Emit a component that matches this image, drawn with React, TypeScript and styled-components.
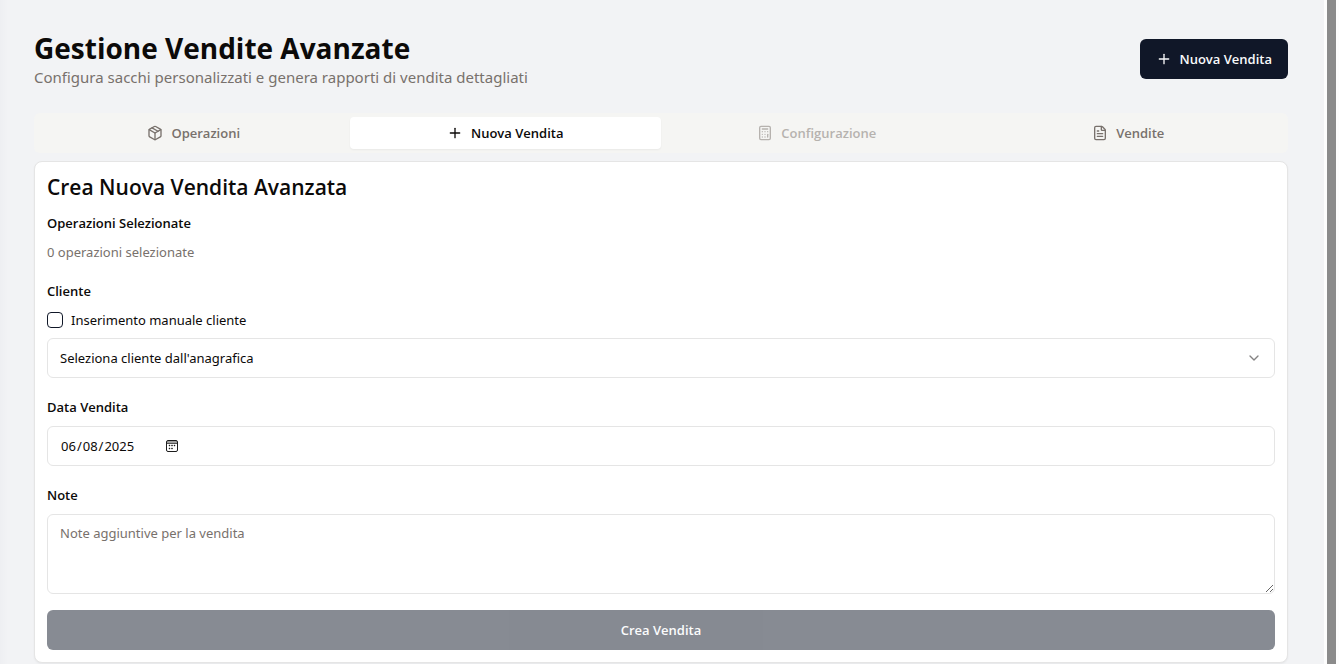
import React, { useState } from "react";
import styled, { createGlobalStyle, css } from "styled-components";
import { Calculator, ChevronDown, FileText, Package, Plus } from "lucide-react";

const GlobalStyle = createGlobalStyle`
  *, *::before, *::after { box-sizing: border-box; }
  body {
    margin: 0;
    background: #fdfdfd;
    color: #0c0a09;
    font-family: "Noto Sans", "Open Sans", sans-serif;
    font-size: 16px;
    line-height: 24px;
  }
  h1, h2, p { margin: 0; }
  button, input, select, textarea { font: inherit; color: inherit; }
`;

const heading = css`
  font-family: "Open Sans", "Noto Sans", sans-serif;
`;

const Shell = styled.div`
  display: flex;
  min-height: 100vh;
`;

const Page = styled.main`
  flex: 1;
  min-width: 0;
  padding: 29px 36px 1px 34px;
  background: linear-gradient(to right, #eeeff2, #f2f3f5 8px);
`;

const ScrollTrack = styled.div`
  flex: none;
  width: 15px;
  padding: 0 3px;
  display: flex;
`;

const ScrollThumb = styled.div`
  flex: 1;
  background: #8b8b8b;
`;

const Header = styled.header`
  display: flex;
  align-items: center;
  justify-content: space-between;
  margin-bottom: 24px;
`;

const Title = styled.h1`
  ${heading}
  padding-top: 2px;
  font-size: 28px;
  line-height: 34px;
  font-weight: 700;
`;

const Subtitle = styled.p`
  font-size: 15px;
  line-height: 24px;
  color: #78716c;
`;

const Button = styled.button<{ $block?: boolean }>`
  ${heading}
  display: inline-flex;
  align-items: center;
  justify-content: center;
  gap: 8px;
  height: 40px;
  padding: 0 16px;
  border: 0;
  border-radius: 6px;
  background: #101728;
  color: #f9fafb;
  font-size: 13px;
  line-height: 20px;
  font-weight: 600;
  ${(p) => p.$block && css`width: 100%;`}
  &:disabled { opacity: 0.5; }
`;

const TabList = styled.div`
  display: grid;
  grid-template-columns: repeat(4, 1fr);
  padding: 4px;
  margin-bottom: 8px;
  border-radius: 6px;
  background: #f5f5f3;
`;

const Tab = styled.button`
  ${heading}
  display: flex;
  align-items: center;
  justify-content: center;
  gap: 8px;
  height: 32px;
  padding: 0 12px;
  border: 0;
  border-radius: 4px;
  background: transparent;
  color: #78716c;
  font-size: 13px;
  line-height: 20px;
  font-weight: 600;
  &[aria-selected="true"] {
    background: #ffffff;
    color: #0c0a09;
    box-shadow: 0 1px 2px rgba(0, 0, 0, 0.05);
  }
  &:disabled { opacity: 0.5; }
`;

const Card = styled.section`
  padding: 12px;
  border: 1px solid #e5e5e5;
  border-radius: 8px;
  background: #ffffff;
  box-shadow: 0 1px 2px rgba(0, 0, 0, 0.05);
`;

const CardTitle = styled.h2`
  ${heading}
  margin-bottom: 10px;
  font-size: 21px;
  line-height: 26px;
  font-weight: 600;
`;

const Form = styled.form`
  display: flex;
  flex-direction: column;
  gap: 16px;
`;

const Field = styled.div`
  display: flex;
  flex-direction: column;
  gap: 8px;
`;

const Label = styled.label`
  ${heading}
  padding-top: 2px;
  font-size: 13px;
  line-height: 22px;
  font-weight: 600;
`;

const Hint = styled.p`
  font-size: 13px;
  line-height: 20px;
  color: #78716c;
`;

const CheckRow = styled.label`
  display: flex;
  align-items: center;
  gap: 8px;
  font-size: 13px;
  line-height: 20px;
`;

const Checkbox = styled.input`
  appearance: none;
  width: 16px;
  height: 16px;
  margin: 0;
  border: 1px solid #101728;
  border-radius: 4px;
  &:checked { background: #101728; }
`;

const control = css`
  width: 100%;
  height: 40px;
  padding: 8px 12px;
  border: 1px solid #e5e5e5;
  border-radius: 6px;
  background: #ffffff;
  font-size: 13px;
  line-height: 20px;
`;

const SelectWrap = styled.div`
  display: grid;
  align-items: center;
  > * { grid-area: 1 / 1; }
  > svg {
    justify-self: end;
    margin-right: 13px;
    opacity: 0.5;
    pointer-events: none;
  }
`;

const Select = styled.select`
  ${control}
  appearance: none;
`;

const calendarIcon = encodeURIComponent(
  `<svg xmlns="http://www.w3.org/2000/svg" width="14" height="14" viewBox="0 0 14 14">
    <path d="M2 2h10v2H2z" fill="#a0a0a0"/>
    <rect x="1.5" y="1.5" width="11" height="11" rx="1.5" fill="none" stroke="#1c1c1c"/>
    <path d="M2 4.500h10" stroke="#555555"/>
    <path d="M4 6h1v1H4zM6.500 6h1v1h-1zM9 6h1v1H9zM4 9h1v1H4zM6.500 9h1v1h-1z" fill="#1c1c1c" stroke="#1c1c1c" stroke-width="0.4"/>
  </svg>`
);

const DateInput = styled.input`
  ${control}
  display: flex;
  &::-webkit-calendar-picker-indicator {
    width: 14px;
    height: 14px;
    padding: 0;
    margin-left: 4px;
    background: url("data:image/svg+xml,${calendarIcon}") center / 14px 14px no-repeat;
  }
`;

const TextArea = styled.textarea`
  ${control}
  display: block;
  height: 80px;
  resize: vertical;
  &::placeholder { color: #78716c; opacity: 1; }
`;

const tabs = [
  { id: "operazioni", label: "Operazioni", Icon: Package },
  { id: "nuova", label: "Nuova Vendita", Icon: Plus },
  { id: "configurazione", label: "Configurazione", Icon: Calculator, disabled: true },
  { id: "vendite", label: "Vendite", Icon: FileText },
];

export default function App() {
  const [active, setActive] = useState("nuova");
  const [manual, setManual] = useState(false);
  const [date, setDate] = useState("2025-06-08");

  return (
    <>
      <GlobalStyle />
      <Shell>
        <Page>
          <Header>
            <div>
              <Title>Gestione Vendite Avanzate</Title>
              <Subtitle>Configura sacchi personalizzati e genera rapporti di vendita dettagliati</Subtitle>
            </div>
            <Button type="button" onClick={() => setActive("nuova")}>
              <Plus size={16} />
              Nuova Vendita
            </Button>
          </Header>
          <TabList role="tablist">
            {tabs.map(({ id, label, Icon, disabled }) => (
              <Tab
                key={id}
                type="button"
                role="tab"
                aria-selected={active === id}
                disabled={disabled}
                onClick={() => setActive(id)}
              >
                <Icon size={16} />
                {label}
              </Tab>
            ))}
          </TabList>
          <Card>
            <CardTitle>Crea Nuova Vendita Avanzata</CardTitle>
            <Form>
              <Field>
                <Label as="div">Operazioni Selezionate</Label>
                <Hint>0 operazioni selezionate</Hint>
              </Field>
              <Field>
                <Label htmlFor="cliente">Cliente</Label>
                <CheckRow>
                  <Checkbox type="checkbox" checked={manual} onChange={(e) => setManual(e.target.checked)} />
                  Inserimento manuale cliente
                </CheckRow>
                <SelectWrap>
                  <Select id="cliente" defaultValue="">
                    <option value="">Seleziona cliente dall'anagrafica</option>
                  </Select>
                  <ChevronDown size={16} />
                </SelectWrap>
              </Field>
              <Field>
                <Label htmlFor="data">Data Vendita</Label>
                <DateInput id="data" type="date" value={date} onChange={(e) => setDate(e.target.value)} />
              </Field>
              <Field>
                <Label htmlFor="note">Note</Label>
                <TextArea id="note" placeholder="Note aggiuntive per la vendita" />
              </Field>
              <Button type="submit" $block disabled>
                Crea Vendita
              </Button>
            </Form>
          </Card>
        </Page>
        <ScrollTrack>
          <ScrollThumb />
        </ScrollTrack>
      </Shell>
    </>
  );
}
